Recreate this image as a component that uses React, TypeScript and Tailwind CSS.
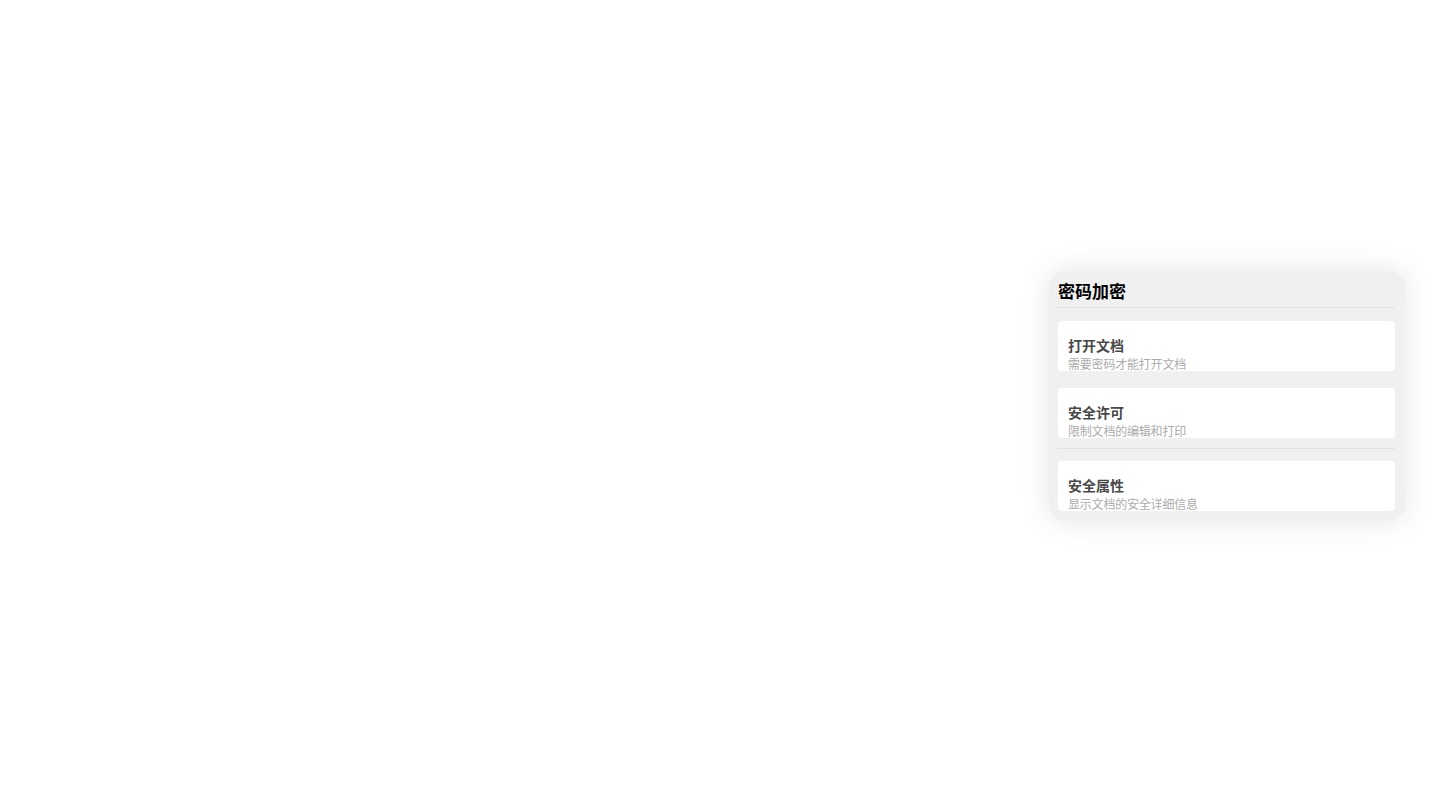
const items = [
  { title: "打开文档", desc: "需要密码才能打开文档" },
  { title: "安全许可", desc: "限制文档的编辑和打印" },
];

const Card = ({ title, desc }: { title: string; desc: string }) => (
  <div className="h-[50px] overflow-hidden rounded bg-white px-[10px] pt-[15px]">
    <div className="text-[14px] leading-[20px] font-semibold text-[#484848]">{title}</div>
    <div className="mt-[1px] text-[12px] leading-[17px] tracking-[-0.2px] text-[#ababab]">{desc}</div>
  </div>
);

const App = () => {
  return (
    <div
      className="flex h-screen w-full items-center justify-end bg-white pr-[37px]"
      style={{ fontFamily: '"Liberation Sans", "Noto Sans CJK SC", sans-serif' }}
    >
      <div className="w-[356px] rounded-[16px] bg-[#f0f0f0] pt-[10px] pr-[10px] pb-[10px] pl-[9px] shadow-[0_0_30px_rgba(0,0,0,0.1)]">
        <div className="border-b border-[#e2e2e2] pb-[2px] text-[17px] leading-[24px] font-bold text-black">
          密码加密
        </div>

        <div className="mt-[13px] flex flex-col gap-[17px]">
          {items.map((item) => (
            <Card key={item.title} {...item} />
          ))}
        </div>

        <div className="mt-[10px] border-t border-[#e2e2e2] pt-[12px]">
          <Card title="安全属性" desc="显示文档的安全详细信息" />
        </div>
      </div>
    </div>
  );
};

export default App;
